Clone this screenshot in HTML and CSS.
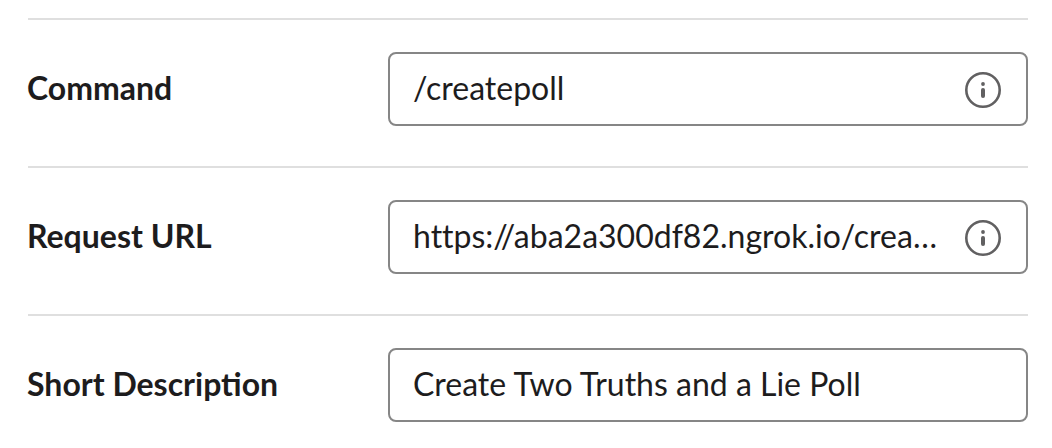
FILE: index.html
```html
<!DOCTYPE html>
<html lang="en">
<head>
<meta charset="utf-8">
<title>Slash command</title>
<link rel="stylesheet" href="styles.css">
</head>
<body>
<form class="form">
  <div class="row">
    <label class="label">Command</label>
    <div class="field"><span class="value">/createpoll</span>
      <svg class="info" viewBox="0 0 36 36"><circle class="ring" cx="18" cy="18" r="16.7"/><circle cx="18" cy="12" r="1.9"/><path class="stem" d="M18 18V24"/></svg>
    </div>
  </div>
  <div class="row">
    <label class="label">Request URL</label>
    <div class="field"><span class="value">https://aba2a300df82.ngrok.io/crea<span class="dots">...</span></span>
      <svg class="info" viewBox="0 0 36 36"><circle class="ring" cx="18" cy="18" r="16.7"/><circle cx="18" cy="12" r="1.9"/><path class="stem" d="M18 18V24"/></svg>
    </div>
  </div>
  <div class="row">
    <label class="label">Short Description</label>
    <div class="field"><span class="value">Create Two Truths and a Lie Poll</span></div>
  </div>
</form>
</body>
</html>
```
FILE: styles.css
```css
* { box-sizing: border-box; }
body { margin: 0; background: #fff; overflow: hidden; font-family: Lato, sans-serif; color: #1d1c1d; }
.form { height: 448px; overflow: hidden; padding: 18px 24px 0 28px; }
.row { display: grid; grid-template-columns: 360px 640px; height: 148px; padding-top: 32px; border-top: 2px solid #dfdfdf; }
.label { margin-left: -1px; font-size: 32px; font-weight: 700; line-height: 72px; white-space: nowrap; }
.field { display: flex; align-items: center; justify-content: space-between; height: 74px; padding: 0 25px 0 23px; border: 2px solid #868686; border-radius: 8px; font-size: 32px; white-space: nowrap; }
.value { line-height: 68px; padding-bottom: 2px; font-variant-ligatures: none; }
.dots { letter-spacing: 0.7px; }
.info { width: 36px; height: 36px; flex: none; margin-top: 2px; fill: #616061; }
.ring { fill: none; stroke: #616061; stroke-width: 2.6; }
.stem { stroke: #616061; stroke-width: 4; stroke-linecap: round; }
```
